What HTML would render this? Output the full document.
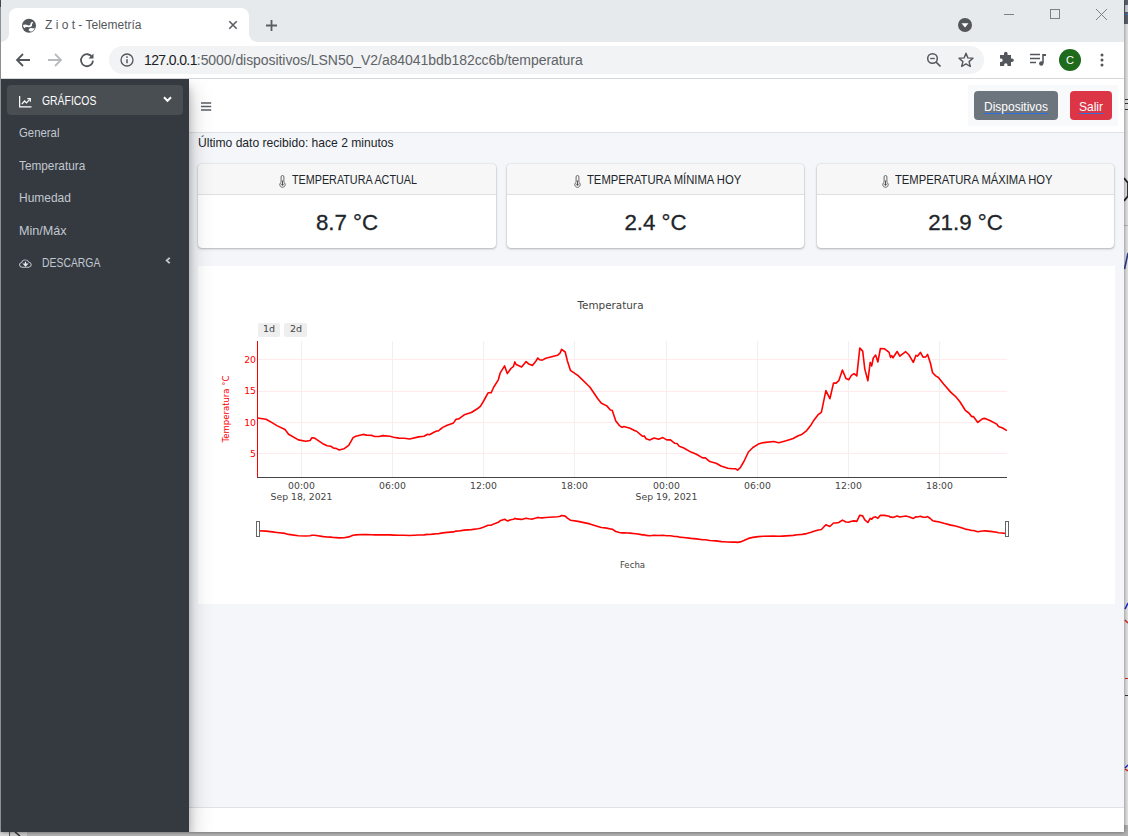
<!DOCTYPE html>
<html lang="es"><head><meta charset="utf-8"><title>Z i o t - Telemetría</title>
<style>
*{box-sizing:border-box;margin:0;padding:0}
html,body{width:1128px;height:836px;overflow:hidden;background:#c9cacc;font-family:"Liberation Sans",sans-serif;}
.abs{position:absolute}
#desk{position:absolute;left:0;top:0;width:1128px;height:836px;background:#d3d4d6;overflow:hidden}
#win{position:absolute;left:1px;top:0;width:1123px;height:832px;background:#fff;overflow:hidden;box-shadow:0 0 4px rgba(0,0,0,.5)}
#tabs{position:absolute;left:0;top:0;width:1123px;height:42px;background:#e7eaed}
#tab{position:absolute;left:8px;top:8px;width:240px;height:34px;background:#fff;border-radius:8px 8px 0 0}
#tab .t{position:absolute;left:36px;top:10px;font-size:12px;color:#54585c;white-space:nowrap}
#tab:before,#tab:after{content:"";position:absolute;bottom:0;width:8px;height:8px;background:radial-gradient(circle at 0 0,transparent 7.5px,#fff 8px)}
#tab:before{left:-8px}
#tab:after{right:-8px;background:radial-gradient(circle at 100% 0,transparent 7.5px,#fff 8px)}
#toolbar{position:absolute;left:0;top:42px;width:1123px;height:37px;background:#fff;border-bottom:1px solid #d5d7da}
#omni{position:absolute;left:108px;top:4px;width:875px;height:28px;border-radius:14px;background:#f1f3f4}
#url{position:absolute;left:35px;top:6px;font-size:14px;color:#5f6368;white-space:nowrap;letter-spacing:-0.06px}
#url b{font-weight:normal;color:#202124;letter-spacing:-0.62px}
#page{position:absolute;left:0;top:79px;width:1123px;height:753px;overflow:hidden}
#side{position:absolute;left:0;top:0;width:188px;height:753px;background:#343a40;box-shadow:0 11px 22px rgba(0,0,0,.25),0 8px 8px rgba(0,0,0,.22);color:#c2c7d0;font-size:13px}
.sx{display:inline-block;transform-origin:0 50%;white-space:nowrap}
#side .act{position:absolute;left:6px;top:6px;width:176px;height:30px;border-radius:4px;background:#494e53}
#side .it{position:absolute;left:18px;white-space:nowrap;color:#c2c7d0}
#side .hd{position:absolute;left:41px;white-space:nowrap}
#main{position:absolute;left:188px;top:0;width:935px;height:753px;background:#f4f6f9}
#nav{position:absolute;left:0;top:0;width:935px;height:54px;background:#fff;border-bottom:1px solid #dee2e6}
.btn{position:absolute;top:12px;height:29px;border-radius:4px;color:#fff;font-size:12px;line-height:32.500px;text-align:center}
.btn span{text-decoration:underline;text-decoration-color:#2d6fe0;text-decoration-thickness:1.3px;text-underline-offset:2px}
.card{position:absolute;top:85px;width:297px;height:84px;background:#fff;border-radius:4px;box-shadow:0 0 1px rgba(0,0,0,.32),0 1px 2.500px rgba(0,0,0,.25)}
.card .h{position:absolute;left:0;top:0;width:100%;height:31px;background:#f7f7f7;border-bottom:1px solid #dfdfdf;border-radius:4px 4px 0 0;font-size:12.5px;line-height:33px;color:#212529;white-space:nowrap}
.card .h svg{position:absolute;top:11px}
.card .h .sx{position:absolute;top:0}
.card .v{position:absolute;left:0;top:42px;width:100%;text-align:center;font-size:22.300px;color:#212529;line-height:34px;-webkit-text-stroke:0.3px #212529}
#chart{position:absolute;left:9px;top:187px;width:917px;height:338px;background:#fff}
#foot{position:absolute;left:0;top:728px;width:935px;height:25px;background:#fff;border-top:1px solid #dee2e6}
svg text{font-family:"DejaVu Sans","Liberation Sans",sans-serif}
</style></head><body>
<div id="desk">
<!-- background strip behind window -->
<div class="abs" style="left:0;top:0;width:2px;height:836px;background:#b4b4b4"></div>
<div class="abs" style="left:0;top:0;width:2px;height:7px;background:#55585c"></div>
<div class="abs" style="left:1124px;top:0;width:4px;height:24px;background:#5b6069"></div>
<div class="abs" style="left:1124px;top:24px;width:4px;height:801px;background:#e2e2e2"></div>
<div class="abs" style="left:1124px;top:825px;width:4px;height:11px;background:#b0b0b0"></div>
<div class="abs" style="left:0;top:832px;width:1128px;height:4px;background:#b2b2b2"></div>
<div class="abs" style="left:0;top:832px;width:9px;height:4px;background:#d8d8d8"></div>
<div class="abs" style="left:9px;top:832px;width:1px;height:4px;background:#555"></div>
<div class="abs" style="left:10px;top:832px;width:17px;height:4px;background:#cacaca"></div>
<svg class="abs" style="left:14px;top:832px" width="8" height="4" viewBox="0 0 8 4"><path d="M1 0 L6 4" stroke="#333" stroke-width="1.6"/></svg>
<div class="abs" style="left:1125px;top:14px;width:3px;height:1px;background:#3b6fd6"></div>
<div class="abs" style="left:1125px;top:5px;width:3px;height:7px;background:#c8ccd4"></div>
<div class="abs" style="left:1125px;top:99px;width:3px;height:1px;background:#333"></div>
<div class="abs" style="left:1125px;top:103px;width:3px;height:1px;background:#333"></div>
<div class="abs" style="left:1125px;top:109px;width:3px;height:1px;background:#333"></div>
<svg class="abs" style="left:1124px;top:177px" width="4" height="25" viewBox="0 0 4 25"><path d="M0 1 L4 6 V19 L0 24" stroke="#222" stroke-width="1.800" fill="none"/></svg>
<div class="abs" style="left:1124px;top:225px;width:4px;height:1px;background:#b8b8b8"></div>
<svg class="abs" style="left:1124px;top:252px" width="4" height="18" viewBox="0 0 4 18"><path d="M0.500 17 L4 1" stroke="#2a3c8c" stroke-width="1.600" fill="none"/></svg>
<svg class="abs" style="left:1124px;top:600px" width="4" height="30" viewBox="0 0 4 30"><path d="M1 9 L4 3" stroke="#22c" stroke-width="1.500" fill="none"/><path d="M1 20 L4 23" stroke="#d22" stroke-width="1.500" fill="none"/></svg>
<div class="abs" style="left:1125px;top:678px;width:3px;height:1px;background:#d22"></div>
<div class="abs" style="left:1125px;top:695px;width:3px;height:1px;background:#333"></div>
<svg class="abs" style="left:1124px;top:762px" width="4" height="12" viewBox="0 0 4 12"><path d="M1 6 L4 3" stroke="#22c" stroke-width="1.500" fill="none"/><path d="M1 7 L4 9" stroke="#d22" stroke-width="1.500" fill="none"/></svg>
<div id="win">
<div id="tabs">
  <div id="tab">
    <svg class="abs" style="left:12px;top:9px" width="16" height="16" viewBox="0 0 16 16"><circle cx="8" cy="8.8" r="7" fill="#54585c"/><path d="M2 8 C3.5 7 5.5 7.400 7 8.200 C8.5 8.800 9.800 7.800 9.600 6.600 C9.500 5.600 10.500 4.800 11.800 5 L12.200 5.900 C11.200 6.100 10.900 6.800 11.100 7.800 C11.300 9.600 9.500 10.600 7.500 10.200 C5.500 9.800 4.200 10.300 3.400 11.200 C2.600 10.400 2.100 9.300 2 8 Z M7.600 13 C8.200 11.400 9.800 10.800 11.200 11.200 C12.400 11.600 13.200 11 13.800 10.400 C13.500 12.300 12.300 13.800 10.600 14.600 C9.400 14.600 8.200 14 7.600 13 Z" fill="#fff"/></svg>
    <div class="t">Z i o t - Telemetría</div>
    <svg class="abs" style="left:219px;top:12px" width="10" height="10" viewBox="0 0 10 10"><path d="M1.300 1.300 L8.700 8.700 M8.700 1.300 L1.300 8.700" stroke="#5a5e63" stroke-width="1.600" fill="none"/></svg>
  </div>
  <svg class="abs" style="left:263.500px;top:18.500px" width="13" height="13" viewBox="0 0 13 13"><path d="M6.500 1 V12 M1 6.500 H12" stroke="#5a5e63" stroke-width="1.8" fill="none"/></svg>
  <svg class="abs" style="left:956px;top:17px" width="16" height="16" viewBox="0 0 16 16"><circle cx="8" cy="8" r="7" fill="#53575b"/><path d="M4.5 6.3 H11.5 L8 10.5 Z" fill="#fff"/></svg>
  <svg class="abs" style="left:1002px;top:8px" width="110" height="14" viewBox="0 0 110 14"><path d="M1 6.500 H11" stroke="#7d8084" stroke-width="1" fill="none"/><rect x="47.500" y="1.500" width="9" height="9" stroke="#7d8084" stroke-width="1" fill="none"/><path d="M93 1 L104 12 M104 1 L93 12" stroke="#7d8084" stroke-width="1" fill="none"/></svg>
</div>
<div id="toolbar">
  <svg class="abs" style="left:14px;top:10px" width="16" height="16" viewBox="0 0 16 16"><path d="M15 8 H2.5 M8 2 L2 8 L8 14" stroke="#53575b" stroke-width="1.8" fill="none"/></svg>
  <svg class="abs" style="left:46px;top:10px" width="16" height="16" viewBox="0 0 16 16"><path d="M1 8 H13.5 M8 2 L14 8 L8 14" stroke="#b8babd" stroke-width="1.8" fill="none"/></svg>
  <svg class="abs" style="left:78px;top:10px" width="16" height="16" viewBox="0 0 16 16"><path d="M13.2 5.2 A6 6 0 1 0 14 8.6" stroke="#53575b" stroke-width="1.8" fill="none"/><path d="M14.5 1.5 V6.5 H9.5 Z" fill="#53575b"/></svg>
  <div id="omni">
    <svg class="abs" style="left:11px;top:7px" width="14" height="14" viewBox="0 0 14 14"><circle cx="7" cy="7" r="6" stroke="#53575b" stroke-width="1.3" fill="none"/><path d="M7 6.2 V10.2" stroke="#53575b" stroke-width="1.5"/><circle cx="7" cy="4.1" r="0.9" fill="#53575b"/></svg>
    <div id="url"><b>127.0.0.1</b>:5000/dispositivos/LSN50_V2/a84041bdb182cc6b/temperatura</div>
    <svg class="abs" style="left:817px;top:6px" width="16" height="16" viewBox="0 0 16 16"><circle cx="6.5" cy="6.5" r="4.8" stroke="#53575b" stroke-width="1.5" fill="none"/><path d="M10 10 L14.5 14.5" stroke="#53575b" stroke-width="1.7"/><path d="M4.2 6.5 H8.8" stroke="#53575b" stroke-width="1.3"/></svg>
    <svg class="abs" style="left:848px;top:5px" width="18" height="18" viewBox="0 0 18 18"><path d="M9 2.2 L10.9 6.9 L16 7.3 L12.1 10.6 L13.3 15.5 L9 12.9 L4.7 15.5 L5.9 10.6 L2 7.3 L7.1 6.9 Z" stroke="#53575b" stroke-width="1.4" fill="none" stroke-linejoin="round"/></svg>
  </div>
  <svg class="abs" style="left:996px;top:9px" width="18" height="18" viewBox="0 0 18 18"><path d="M7 2.5 a1.8 1.8 0 0 1 3.6 0 V4 H14 V7.5 h1 a1.8 1.8 0 0 1 0 3.6 h-1 V15 H10.5 v-1 a1.7 1.7 0 0 0 -3.4 0 v1 H3 V11 h1 a1.7 1.7 0 0 0 0 -3.4 H3 V4 H7 Z" fill="#53575b"/></svg>
  <svg class="abs" style="left:1028px;top:10px" width="18" height="16" viewBox="0 0 18 16"><path d="M1 2.5 H11 M1 6.5 H11 M1 10.5 H7" stroke="#53575b" stroke-width="1.6" fill="none"/><path d="M14 2 V11" stroke="#53575b" stroke-width="1.6"/><path d="M14 2 H17 V4 H14 Z" fill="#53575b"/><circle cx="12.3" cy="11.5" r="2.2" fill="#53575b"/></svg>
  <div class="abs" style="left:1058px;top:7px;width:22px;height:22px;border-radius:11px;background:#1e6b1e;color:#fff;font-size:11px;line-height:22px;text-align:center">C</div>
  <svg class="abs" style="left:1098px;top:10px" width="6" height="16" viewBox="0 0 6 16"><circle cx="3" cy="3" r="1.5" fill="#53575b"/><circle cx="3" cy="8" r="1.5" fill="#53575b"/><circle cx="3" cy="13" r="1.5" fill="#53575b"/></svg>
</div>
<div id="page">
<div id="main">
  <div id="nav">
    <svg class="abs" style="left:12px;top:23px" width="11" height="9" viewBox="0 0 11 9"><path d="M0 1 H10.200 M0 4.500 H10.200 M0 8 H10.200" stroke="#5a5f64" stroke-width="1.300"/></svg>
    <div class="abs" style="left:779px;top:6px;width:150px;height:41px;background:#f8f9fa"></div>
    <div class="btn" style="left:785px;width:84px;background:#6c757d"><span>Dispositivos</span></div>
    <div class="btn" style="left:881px;width:42px;background:#dc3545"><span>Salir</span></div>
  </div>
  <div class="abs" style="left:9px;top:57px;font-size:12.1px;color:#212529;white-space:nowrap">Último dato recibido: hace 2 minutos</div>
  <div class="card" style="left:9px;width:298px"><div class="h"><svg width="7" height="13" viewBox="0 0 7 13" style="left:81px"><path d="M2.100 1.900 a1.400 1.400 0 0 1 2.800 0 V7.300 a2.700 2.700 0 1 1 -2.800 0 Z" stroke="#444" stroke-width="0.800" fill="none"/><circle cx="3.500" cy="9.600" r="1.150" fill="#444"/><path d="M3.500 5.500 V9" stroke="#444" stroke-width="0.900"/></svg><span class="sx" style="left:94px;transform:scaleX(.862)">TEMPERATURA ACTUAL</span></div><div class="v">8.7 °C</div></div>
  <div class="card" style="left:318px"><div class="h"><svg width="7" height="13" viewBox="0 0 7 13" style="left:67px"><path d="M2.100 1.900 a1.400 1.400 0 0 1 2.800 0 V7.300 a2.700 2.700 0 1 1 -2.800 0 Z" stroke="#444" stroke-width="0.800" fill="none"/><circle cx="3.500" cy="9.600" r="1.150" fill="#444"/><path d="M3.500 5.500 V9" stroke="#444" stroke-width="0.900"/></svg><span class="sx" style="left:80px;transform:scaleX(.9)">TEMPERATURA MÍNIMA HOY</span></div><div class="v">2.4 °C</div></div>
  <div class="card" style="left:628px"><div class="h"><svg width="7" height="13" viewBox="0 0 7 13" style="left:65px"><path d="M2.100 1.900 a1.400 1.400 0 0 1 2.800 0 V7.300 a2.700 2.700 0 1 1 -2.800 0 Z" stroke="#444" stroke-width="0.800" fill="none"/><circle cx="3.500" cy="9.600" r="1.150" fill="#444"/><path d="M3.500 5.500 V9" stroke="#444" stroke-width="0.900"/></svg><span class="sx" style="left:78px;transform:scaleX(.8975)">TEMPERATURA MÁXIMA HOY</span></div><div class="v">21.9 °C</div></div>
  <div id="chart"></div>
  <div id="foot"></div>
</div>
<div id="side">
  <div class="act"></div>
  <svg class="abs" style="left:18px;top:17px" width="13" height="11.500" viewBox="0 0 14 12" preserveAspectRatio="none"><path d="M0.7 0 V11.3 H13.5" stroke="#fff" stroke-width="1.3" fill="none"/><path d="M3 8.5 L6 5.2 L8 7.2 L11.5 3.5" stroke="#fff" stroke-width="1.3" fill="none"/><path d="M9 2.8 H12.2 V6" stroke="#fff" stroke-width="1.3" fill="none"/></svg>
  <div class="hd" style="top:14px;color:#fff"><span class="sx" style="transform:scaleX(.8)">GRÁFICOS</span></div>
  <svg class="abs" style="left:162px;top:17px" width="9" height="7" viewBox="0 0 9 7"><path d="M1 1.2 L4.5 4.8 L8 1.2" stroke="#fff" stroke-width="2" fill="none"/></svg>
  <div class="it" style="top:46px"><span class="sx" style="transform:scaleX(.875)">General</span></div>
  <div class="it" style="top:79px"><span class="sx" style="transform:scaleX(.908)">Temperatura</span></div>
  <div class="it" style="top:111px"><span class="sx" style="transform:scaleX(.92)">Humedad</span></div>
  <div class="it" style="top:144px"><span class="sx" style="transform:scaleX(.97)">Min/Máx</span></div>
  <svg class="abs" style="left:18px;top:180px" width="13" height="9" viewBox="0 0 14 11" preserveAspectRatio="none"><path d="M3.5 10 a3 3 0 0 1 -0.6 -5.9 a4 4 0 0 1 7.7 -0.3 a3.2 3.2 0 0 1 0.2 6.2 Z" stroke="#c2c7d0" stroke-width="1.1" fill="none"/><path d="M7 3.500 V8 M5 6 L7 8.400 L9 6 Z" stroke="#e8eaee" stroke-width="1.300" fill="#e8eaee"/></svg>
  <div class="hd" style="top:176px"><span class="sx" style="transform:scaleX(.8)">DESCARGA</span></div>
  <svg class="abs" style="left:163.500px;top:178px" width="6" height="7" viewBox="0 0 7 10" preserveAspectRatio="none"><path d="M5.5 1 L2 5 L5.5 9" stroke="#c2c7d0" stroke-width="2.400" fill="none"/></svg>
</div>
</div>
<!-- chart svg in window coordinates (window left = 1px) -->
<svg class="abs" style="left:-1px;top:0" width="1128" height="836" viewBox="0 0 1128 836">
  <g stroke="#f0f0f0" stroke-width="1" fill="none">
    <path d="M301.5 341 V477 M392.5 341 V477 M483.5 341 V477 M574.5 341 V477 M666.5 341 V477 M757.5 341 V477 M848.5 341 V477 M939.5 341 V477"/>
  </g>
  <g stroke="#ffebeb" stroke-width="1" fill="none">
    <path d="M258 359.5 H1007 M258 391.5 H1007 M258 422.5 H1007 M258 453.5 H1007"/>
  </g>
  <path d="M257.5 341 V477.5" stroke="#ff0000" stroke-width="1" fill="none"/>
  <path d="M257 477.5 H1007" stroke="#444" stroke-width="1" fill="none"/>
  <path d="M257.5,418.0 L266.1,419.3 L272.4,422.9 L276.9,425.6 L285.0,429.5 L288.6,434.2 L298.4,439.9 L305.6,441.2 L310.1,440.5 L311.9,437.8 L314.6,438.1 L323.5,444.1 L327.1,445.7 L330.7,446.2 L333.4,448.0 L336.1,448.4 L339.1,450.0 L344.2,448.7 L348.7,445.3 L353.1,437.6 L355.8,436.3 L363.0,434.4 L366.6,435.1 L372.0,435.4 L374.7,436.5 L379.1,436.5 L382.7,435.6 L389.9,436.3 L393.5,437.2 L398.9,438.1 L404.3,438.3 L409.6,439.0 L418.6,436.9 L424.0,436.3 L427.6,434.2 L429.4,434.7 L433.0,432.8 L436.5,431.0 L438.3,431.0 L440.0,429.5 L442.8,427.4 L447.2,425.2 L447.3,425.2 L453.5,422.9 L456.1,419.3 L458.8,418.9 L464.2,414.8 L471.4,412.5 L477.7,408.5 L480.4,406.4 L483.9,400.5 L488.1,392.8 L491.1,392.8 L493.8,387.0 L498.3,379.8 L500.1,373.2 L504.6,365.9 L507.3,373.6 L510.9,368.5 L513.5,366.4 L514.8,361.9 L516.2,364.6 L521.6,366.9 L526.1,361.5 L528.8,364.1 L532.4,365.5 L536.0,361.0 L537.8,358.0 L539.6,359.8 L542.2,360.1 L545.8,358.3 L557.5,355.3 L560.2,352.9 L561.6,349.3 L565.2,352.0 L567.4,361.0 L570.4,370.3 L578.1,375.7 L589.8,387.0 L597.8,398.7 L601.4,403.2 L606.8,405.9 L610.4,410.0 L612.2,410.3 L615.8,421.1 L619.4,425.6 L622.1,427.4 L623.9,426.5 L628.3,427.7 L630.0,428.3 L635.5,431.0 L636.3,431.0 L642.6,436.3 L644.3,436.0 L646.1,438.7 L649.7,439.9 L654.2,438.0 L658.7,439.2 L662.8,437.6 L666.8,439.9 L670.4,439.9 L674.8,443.3 L677.0,443.5 L679.3,446.2 L683.8,448.0 L691.0,452.1 L696.4,454.3 L702.6,457.9 L705.3,457.9 L709.8,461.6 L716.1,463.3 L721.5,466.3 L723.3,466.7 L727.8,468.3 L732.2,468.8 L735.8,468.8 L737.6,470.1 L740.3,467.7 L743.9,461.5 L748.4,452.0 L752.9,447.5 L758.3,444.1 L763.6,442.6 L773.5,441.5 L778.9,442.8 L782.5,441.7 L786.1,440.8 L793.2,438.5 L797.7,436.0 L802.2,434.2 L806.7,430.6 L811.2,424.7 L813.9,420.2 L818.3,414.5 L820.0,413.4 L821.4,412.1 L825.9,390.6 L829.9,398.7 L833.5,383.1 L836.1,383.1 L838.8,380.7 L842.4,370.0 L846.0,378.6 L848.7,379.8 L851.4,375.4 L854.1,373.6 L856.8,375.9 L859.8,348.1 L862.7,351.1 L864.8,369.1 L867.9,380.7 L870.2,362.3 L871.7,365.9 L873.3,358.0 L875.6,355.1 L877.9,361.9 L880.4,348.5 L884.6,348.8 L889.1,352.4 L890.5,357.4 L891.7,355.6 L893.0,357.8 L897.1,351.5 L899.8,356.2 L905.7,351.7 L908.8,354.7 L913.3,362.4 L916.0,355.3 L917.4,356.2 L920.4,352.4 L923.1,357.1 L925.8,356.9 L927.6,354.4 L930.3,362.8 L932.6,372.7 L935.7,375.9 L938.4,377.5 L943.8,384.3 L950.9,392.4 L955.4,396.3 L959.9,401.7 L965.3,410.3 L968.9,413.0 L971.6,416.6 L973.4,416.6 L977.8,422.4 L982.3,418.8 L985.0,418.4 L990.4,420.7 L996.7,424.1 L998.5,426.5 L1002.1,427.7 L1006.9,430.6" stroke="#f00" stroke-width="1.600" fill="none" stroke-linejoin="round"/>
  <path d="M257.5,530.8 L266.1,531.1 L272.4,531.9 L276.9,532.5 L285.0,533.4 L288.6,534.4 L298.4,535.7 L305.6,536.0 L310.1,535.8 L311.9,535.2 L314.6,535.3 L323.5,536.6 L327.1,537.0 L330.7,537.1 L333.4,537.5 L336.1,537.6 L339.1,537.9 L344.2,537.7 L348.7,536.9 L353.1,535.2 L355.8,534.9 L363.0,534.5 L366.6,534.6 L372.0,534.7 L374.7,534.9 L379.1,534.9 L382.7,534.7 L389.9,534.9 L393.5,535.1 L398.9,535.3 L404.3,535.3 L409.6,535.5 L418.6,535.0 L424.0,534.9 L427.6,534.4 L429.4,534.5 L433.0,534.1 L436.5,533.7 L438.3,533.7 L440.0,533.4 L442.8,532.9 L447.2,532.4 L447.3,532.4 L453.5,531.9 L456.1,531.1 L458.8,531.0 L464.2,530.1 L471.4,529.6 L477.7,528.7 L480.4,528.2 L483.9,526.9 L488.1,525.2 L491.1,525.2 L493.8,523.9 L498.3,522.3 L500.1,520.8 L504.6,519.2 L507.3,520.9 L510.9,519.8 L513.5,519.3 L514.8,518.3 L516.2,518.9 L521.6,519.4 L526.1,518.2 L528.8,518.8 L532.4,519.1 L536.0,518.1 L537.8,517.4 L539.6,517.8 L542.2,517.9 L545.8,517.5 L557.5,516.8 L560.2,516.3 L561.6,515.5 L565.2,516.1 L567.4,518.1 L570.4,520.2 L578.1,521.4 L589.8,523.9 L597.8,526.5 L601.4,527.5 L606.8,528.1 L610.4,529.0 L612.2,529.1 L615.8,531.5 L619.4,532.5 L622.1,532.9 L623.9,532.7 L628.3,533.0 L630.0,533.1 L635.5,533.7 L636.3,533.7 L642.6,534.9 L644.3,534.8 L646.1,535.4 L649.7,535.7 L654.2,535.3 L658.7,535.5 L662.8,535.2 L666.8,535.7 L670.4,535.7 L674.8,536.5 L677.0,536.5 L679.3,537.1 L683.8,537.5 L691.0,538.4 L696.4,538.9 L702.6,539.7 L705.3,539.7 L709.8,540.5 L716.1,540.9 L721.5,541.6 L723.3,541.7 L727.8,542.0 L732.2,542.1 L735.8,542.1 L737.6,542.4 L740.3,541.9 L743.9,540.5 L748.4,538.4 L752.9,537.4 L758.3,536.6 L763.6,536.3 L773.5,536.1 L778.9,536.3 L782.5,536.1 L786.1,535.9 L793.2,535.4 L797.7,534.8 L802.2,534.4 L806.7,533.6 L811.2,532.3 L813.9,531.3 L818.3,530.0 L820.0,529.8 L821.4,529.5 L825.9,524.7 L829.9,526.5 L833.5,523.0 L836.1,523.0 L838.8,522.5 L842.4,520.1 L846.0,522.0 L848.7,522.3 L851.4,521.3 L854.1,520.9 L856.8,521.4 L859.8,515.2 L862.7,515.9 L864.8,519.9 L867.9,522.5 L870.2,518.4 L871.7,519.2 L873.3,517.4 L875.6,516.8 L877.9,518.3 L880.4,515.3 L884.6,515.4 L889.1,516.2 L890.5,517.3 L891.7,516.9 L893.0,517.4 L897.1,516.0 L899.8,517.0 L905.7,516.0 L908.8,516.7 L913.3,518.4 L916.0,516.8 L917.4,517.0 L920.4,516.2 L923.1,517.2 L925.8,517.2 L927.6,516.6 L930.3,518.5 L932.6,520.7 L935.7,521.4 L938.4,521.8 L943.8,523.3 L950.9,525.1 L955.4,526.0 L959.9,527.2 L965.3,529.1 L968.9,529.7 L971.6,530.5 L973.4,530.5 L977.8,531.8 L982.3,531.0 L985.0,530.9 L990.4,531.4 L996.7,532.2 L998.5,532.7 L1002.1,533.0 L1006.9,533.6" stroke="#f00" stroke-width="1.600" fill="none" stroke-linejoin="round"/>
  <rect x="256.5" y="521.5" width="3" height="15" fill="#fff" stroke="#666" stroke-width="1"/>
  <rect x="1005.5" y="521.5" width="3" height="15" fill="#fff" stroke="#666" stroke-width="1"/>
  <rect x="258" y="323" width="22" height="14" rx="2" fill="#eee"/><rect x="284" y="323" width="23" height="14" rx="2" fill="#eee"/>
  <g font-size="9.5" fill="#444"><text x="269" y="332" text-anchor="middle">1d</text><text x="296" y="332" text-anchor="middle">2d</text></g>
  <text x="610.500" y="309" text-anchor="middle" font-size="10.400" fill="#444">Temperatura</text>
  <g font-size="9.300" fill="#f00" text-anchor="end"><text x="256" y="363">20</text><text x="256" y="393.600">15</text><text x="256" y="426">10</text><text x="256" y="457">5</text></g>
  <text transform="translate(229.300,409) rotate(-90)" text-anchor="middle" font-size="8.500" fill="#f00">Temperatura °C</text>
  <g font-size="9.300" fill="#444" text-anchor="middle">
    <text x="301.500" y="489">00:00</text><text x="392.500" y="489">06:00</text><text x="483.500" y="489">12:00</text><text x="574.500" y="489">18:00</text>
    <text x="666.500" y="489">00:00</text><text x="757.500" y="489">06:00</text><text x="848.500" y="489">12:00</text><text x="939.500" y="489">18:00</text>
    <text x="301.500" y="500">Sep 18, 2021</text><text x="666.500" y="500">Sep 19, 2021</text>
  </g>
  <text x="632.500" y="568" text-anchor="middle" font-size="8.600" fill="#444">Fecha</text>
</svg>
</div>
</div>
</body></html>
